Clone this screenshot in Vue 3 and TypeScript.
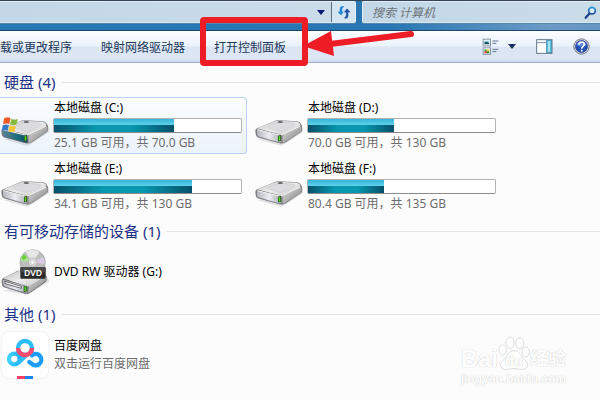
<script setup lang="ts">
interface Drive {
  letter: string
  free: number
  freeLabel: string
  total: number
  totalLabel: string
  system?: boolean
}

const drives: Drive[] = [
  { letter: 'C', free: 25.1, freeLabel: '25.1 GB', total: 70, totalLabel: '70.0 GB', system: true },
  { letter: 'D', free: 70, freeLabel: '70.0 GB', total: 130, totalLabel: '130 GB' },
  { letter: 'E', free: 34.1, freeLabel: '34.1 GB', total: 130, totalLabel: '130 GB' },
  { letter: 'F', free: 80.4, freeLabel: '80.4 GB', total: 135, totalLabel: '135 GB' },
]

const commands: string[] = ['载或更改程序', '映射网络驱动器', '打开控制面板']

const usedPercent = (d: Drive): string => `${((d.total - d.free) / d.total) * 100}%`
</script>

<template>
  <div class="window">
    <svg class="defs" width="0" height="0" aria-hidden="true">
      <defs>
        <linearGradient id="caseTop" x1="0" y1="0" x2="1" y2="1">
          <stop offset="0" stop-color="#c4c4c6" />
          <stop offset="0.5" stop-color="#ececec" />
          <stop offset="1" stop-color="#c4c4c4" />
        </linearGradient>
        <linearGradient id="caseFront" x1="0" y1="0" x2="1" y2="0">
          <stop offset="0" stop-color="#b4b4bc" />
          <stop offset="0.5" stop-color="#ececf4" />
          <stop offset="1" stop-color="#a4a4aa" />
        </linearGradient>
        <linearGradient id="caseSide" x1="0" y1="0" x2="1" y2="1">
          <stop offset="0" stop-color="#e0e0e0" />
          <stop offset="1" stop-color="#7c7c7c" />
        </linearGradient>
        <linearGradient id="tealFront" x1="0" y1="0" x2="1" y2="0">
          <stop offset="0" stop-color="#5f8190" />
          <stop offset="0.6" stop-color="#1a6c80" />
          <stop offset="1" stop-color="#164b5b" />
        </linearGradient>
        <linearGradient id="cloud" x1="0" y1="0" x2="1" y2="0">
          <stop offset="0" stop-color="#3fd3fb" />
          <stop offset="1" stop-color="#22b0fa" />
        </linearGradient>
        <linearGradient id="lens" x1="0" y1="0" x2="0" y2="1">
          <stop offset="0" stop-color="#2c9ad8" />
          <stop offset="1" stop-color="#1d3c8c" />
        </linearGradient>
      </defs>
    </svg>

    <header class="navbar">
      <div class="address">
        <button class="address-drop" type="button" aria-label="地址">
          <svg width="8" height="5" viewBox="0 0 8 5"><path d="M0 0h8L4 5z" fill="#0b1878" /></svg>
        </button>
        <button class="refresh" type="button" aria-label="刷新">
          <svg width="16" height="16" viewBox="0 0 48 48">
            <path d="M22 5C11 5 9 12 10 22H2l13 13 12-13h-7c-1-8 0-11 6-14z" fill="#2586d4" stroke="#e7f4ff" stroke-width="2" />
            <path d="M26 45c11 0 13-7 12-19h8L33 12 21 26h8c1 8 0 12-6 15z" fill="#1f55a4" stroke="#e7f4ff" stroke-width="2" />
          </svg>
        </button>
      </div>
      <label class="search">
        <input type="text" placeholder="搜索 计算机" aria-label="搜索 计算机" />
        <svg width="13" height="13" viewBox="0 0 39 39">
          <path d="M17 22L5 35" stroke="#1c3f88" stroke-width="7" stroke-linecap="round" />
          <circle cx="24" cy="14" r="10" fill="#d7effa" stroke="url(#lens)" stroke-width="5" />
        </svg>
      </label>
    </header>

    <nav class="toolbar">
      <div class="commands">
        <button v-for="c in commands" :key="c" type="button">{{ c }}</button>
      </div>
      <div class="tools">
        <button class="view" type="button" aria-label="更改视图">
          <svg width="18" height="18" viewBox="0 0 54 54">
            <g fill="#fff" stroke="#8796aa" stroke-width="3">
              <rect x="3.500" y="3.500" width="22" height="20" />
              <rect x="3.500" y="29.500" width="22" height="20" />
            </g>
            <path d="M7 8h15v6H7z" fill="#8ed5f4" />
            <path d="M7 13l8-2 7 4v4H7z" fill="#175763" />
            <path d="M7 34h7v6H7z" fill="#35a64a" />
            <path d="M14 34h8v6h-8z" fill="#e5c827" />
            <path d="M7 40h8v6H7z" fill="#c53936" />
            <path d="M15 40h7v6h-7z" fill="#22801f" />
            <path d="M31 9h18M31 16h12M31 34h18M31 41h12" stroke="#637792" stroke-width="3" />
          </svg>
          <svg class="caret" width="8" height="5" viewBox="0 0 8 5"><path d="M0 0h8L4 5z" fill="#14305c" /></svg>
        </button>
        <button type="button" aria-label="预览窗格">
          <svg width="17" height="15" viewBox="0 0 51 45">
            <rect x="2" y="2" width="46" height="41" fill="#fff" stroke="#64748a" stroke-width="3" />
            <path d="M3 11h27" stroke="#7d8da2" stroke-width="3" />
            <rect x="31" y="4" width="16" height="37" fill="#5bbbd6" stroke="#3b86a4" stroke-width="2" />
            <path d="M36 6h6v32h-6z" fill="#a8e3ef" />
          </svg>
        </button>
        <button type="button" aria-label="帮助">
          <svg width="17" height="17" viewBox="0 0 51 51">
            <circle cx="25.500" cy="25.500" r="23" fill="#d7d9de" stroke="#777b85" stroke-width="3" />
            <circle cx="25.500" cy="25.500" r="18" fill="#2250b4" stroke="#18337f" stroke-width="2" />
            <path d="M10 22a16 16 0 0 1 31 0q-16 7-31 0z" fill="#5c86da" />
            <path d="M18 20c0-10 16-10 16-1 0 6-8 6-8 13" fill="none" stroke="#fff" stroke-width="5" />
            <circle cx="26" cy="38" r="3" fill="#fff" />
          </svg>
        </button>
      </div>
    </nav>

    <main class="content">
      <section>
        <h2>硬盘 (4)</h2>
        <div class="grid">
          <article v-for="d in drives" :key="d.letter" class="tile" :class="{ selected: d.system }">
            <svg class="icon" width="50" height="48" viewBox="0 -46 150 144">
              <path d="M10 66l72 20 66-42-4-12z" fill="#000" opacity="0.1" />
              <path d="M4 42q-1-6 5-9l48-20q8-4 18-4l54 3q8 1 12 8 5 5 4 16 0 6-5 9L96 75q-9 5-18 3L11 60q-6-2-7-18z" fill="#808084" />
              <path d="M9 33l50-20q6-3 15-3l53 3q8 1 12 8-2 6-6 8L88 50q-6 3-14 1z" fill="url(#caseTop)" />
              <path d="M42 28l28-12q6-2 14-1l35 3q9 2 1 7L88 40q-7 3-15 1l-29-8q-5-2-2-5z" fill="#dcdcdf" stroke="#bcbcbf" />
              <path d="M86 52l51-25 5 2q2 11-3 15L94 73q-4 3-9 3z" fill="url(#caseSide)" />
              <path d="M8 36l66 16q9 3 10 23-5 2-9 1L12 58q-6-4-4-22z" :fill="d.system ? 'url(#tealFront)' : 'url(#caseFront)'" stroke="#707077" stroke-width="2" />
              <path d="M10 37l65 16q6 1 9-1l55-26" fill="none" stroke="#f8f8f8" stroke-width="3" />
              <ellipse cx="79" cy="14" rx="8" ry="3" fill="#666" />
              <path d="M72 55l9-2v17l-9 2z" fill="#214617" />
              <path d="M74 57l5-1v13l-5 1z" fill="#52dc22" />
              <g v-if="d.system" stroke="#fff" stroke-opacity="0.4">
                <path d="M12 3q10-6 20-1l-4 18q-9-4-19 1z" fill="#ed5a24" />
                <path d="M34 4q9 5 20 0l-5 18q-9 4-19-1z" fill="#83b83b" />
                <path d="M8 24q9-5 19-1l-4 18q-8-4-18 0z" fill="#317bc6" />
                <path d="M29 24q10 5 19 1l-4 18q-10 3-19-1z" fill="#f7c536" />
              </g>
            </svg>
            <div class="details">
              <div class="name">本地磁盘 ({{ d.letter }}:)</div>
              <div class="bar"><div class="used" :style="{ width: usedPercent(d) }"></div></div>
              <div class="note">{{ d.freeLabel }} 可用，共 {{ d.totalLabel }}</div>
            </div>
          </article>
        </div>
      </section>

      <section>
        <h2>有可移动存储的设备 (1)</h2>
        <article class="item">
          <svg class="icon" width="50" height="48" viewBox="0 0 150 144">
            <path d="M10 128l72 12 66-38-4-12z" fill="#000" opacity="0.1" />
            <path d="M5 98q0-6 6-8l42-22h70q16 10 17 18 2 10-3 16l-46 32q-8 5-16 3L12 118q-7-3-7-20z" fill="#78787c" />
            <path d="M10 91l44-22h68l17 16-50 29q-7 3-15 0z" fill="url(#caseTop)" />
            <path d="M87 114l51-29q2 10-3 15l-44 31q-4 3-7 3z" fill="url(#caseSide)" />
            <path d="M8 94l65 19q10 5 10 21-5 2-10 0L13 116q-6-4-5-22z" fill="url(#caseFront)" stroke="#707077" stroke-width="2" />
            <path d="M15 100l49 15v6l-49-14z" fill="#f6f6f6" stroke="#303034" stroke-width="2" />
            <path d="M72 115l8-1v15l-8 2z" fill="#48d018" stroke="#284e19" stroke-width="2" />
            <circle cx="98" cy="43" r="38" fill="#bebebe" stroke="#98989a" stroke-width="2" />
            <path d="M98 43L76 12q22-13 42 0z" fill="#e7e7e7" />
            <path d="M98 43L61 39q2-13 10-21z" fill="#b2dc9b" />
            <path d="M64 29l8-10 9 9-10 9z" fill="#65d438" />
            <path d="M98 43l36 5q1-11-4-20z" fill="#dbcae3" />
            <circle cx="98" cy="43" r="13" fill="#dbdbdb" stroke="#aaa" stroke-width="2" />
            <circle cx="98" cy="43" r="6" fill="#f9f9f9" stroke="#999" />
            <rect x="61" y="58" width="76" height="34" rx="3" fill="#2b2b2b" />
            <path d="M61 58h76v14q-38 6-76 0z" fill="#494949" />
            <text x="99" y="84" text-anchor="middle" class="dvd">DVD</text>
          </svg>
          <div class="details"><div class="name">DVD RW 驱动器 (G:)</div></div>
        </article>
      </section>

      <section>
        <h2>其他 (1)</h2>
        <article class="item">
          <svg class="icon" width="50" height="50" viewBox="0 0 150 150">
            <rect x="4" y="4" width="142" height="142" rx="24" fill="#fff" stroke="#ececec" stroke-width="2" />
            <g fill="none" stroke-width="13" stroke-linecap="round">
              <path d="M75 76L93 96" stroke="#fff" />
              <circle cx="43" cy="87" r="16" stroke="url(#cloud)" />
              <path d="M55 98L77 77" stroke="#2dbdfb" />
              <path d="M88 96l6 4a17 17 0 1 0 2-24" stroke="#1c9dfa" />
              <circle cx="75" cy="54" r="21" stroke="#2bbcfa" />
              <path d="M54 54a21 21 0 0 0 42 0" stroke="#fa4a70" stroke-linecap="butt" />
            </g>
            <path d="M51 138h24v9H51z" fill="#fa4168" />
            <path d="M75 138h24v9H75z" fill="#1e80f7" />
          </svg>
          <div class="details roomy">
            <div class="name">百度网盘</div>
            <div class="note">双击运行百度网盘</div>
          </div>
        </article>
      </section>
    </main>

    <svg class="marker" width="420" height="70" viewBox="0 0 420 70" aria-hidden="true">
      <rect x="203" y="20" width="102" height="43" rx="1" fill="none" stroke="#ee1c25" stroke-width="6" />
      <path d="M330 44L411 34" stroke="#ee1c25" stroke-width="6" stroke-linecap="round" />
      <path d="M303 46L331 31L334 56z" fill="#ee1c25" />
    </svg>

    <div class="watermark">
      <div class="brand">
        <span class="latin">Bai</span>
        <span class="paw">
          <svg width="32" height="36" viewBox="0 0 96 108">
            <g fill="#fefefe" stroke="#dedede" stroke-width="3">
              <ellipse cx="14" cy="45" rx="11" ry="15" />
              <ellipse cx="36" cy="23" rx="12" ry="17" />
              <ellipse cx="65" cy="25" rx="12" ry="16" />
              <ellipse cx="83" cy="51" rx="11" ry="15" />
              <path d="M48 47c-18 0-18 17-31 27-19 16-6 33 12 29 14-3 24-3 38 0 21 3 30-15 12-30-13-11-14-26-31-26z" />
            </g>
          </svg>
          <span class="du">du</span>
        </span>
        <span class="han">经验</span>
      </div>
      <div class="site">jingyan.baidu.com</div>
    </div>
  </div>
</template>

<style>
body {
  margin: 0;
  background: #fcfcfc;
}
</style>

<style scoped>
.window {
  position: relative;
  min-height: 100vh;
  overflow: hidden;
  background: #fcfcfc;
  color: #000;
  font-family: "Noto Sans", "Noto Sans CJK SC", sans-serif;
  font-size: 12px;
}

.defs {
  position: absolute;
}

button {
  display: flex;
  align-items: center;
  padding: 0;
  border: 0;
  background: none;
  color: inherit;
  font: inherit;
}

svg {
  display: block;
  flex: none;
}

.navbar {
  display: grid;
  grid-template-columns: 356fr 238fr;
  gap: 6px;
  height: 31px;
  box-sizing: border-box;
  padding-bottom: 7px;
  border-top: 1px solid #344456;
  border-bottom: 1px solid #1d4468;
  background: linear-gradient(90deg, #2679b4 0%, #2876b2 65%, #6c9bc7 92%, #6595c2 100%);
}

.address,
.search {
  display: flex;
  align-items: center;
  box-sizing: border-box;
  border: 1px solid #e3eef5;
  border-bottom-color: #d6e6f1;
  background: linear-gradient(90deg, #c3d7e6, #cbdce9);
  box-shadow: 0 1px #5688ad;
}

.address {
  justify-content: flex-end;
  border-left: 0;
  border-radius: 0 2px 2px 0;
}

.address-drop {
  padding: 0 6px;
}

.refresh {
  align-self: stretch;
  justify-content: center;
  width: 24px;
  border-left: 1px solid #5b6f80;
  background: #d5e5f1;
}

.search {
  padding: 0 3px 0 9px;
  border-right: 0;
  border-radius: 2px 0 0 2px;
}

.search input {
  flex: 1;
  min-width: 0;
  padding: 0;
  border: 0;
  outline: 0;
  background: none;
  font: inherit;
  font-style: italic;
}

.search input::placeholder {
  color: #6c747b;
  opacity: 1;
}

.toolbar {
  display: flex;
  align-items: center;
  justify-content: space-between;
  box-sizing: border-box;
  height: 32px;
  padding-right: 10px;
  border-bottom: 1px solid #9daec6;
  background: linear-gradient(#fcfeff 0%, #eaf2fb 48%, #dbe5f3 52%, #dce6f4 90%, #cdd9ea 100%);
  color: #1e395b;
}

.commands {
  display: flex;
  gap: 29px;
}

.tools {
  display: flex;
  align-items: center;
  gap: 20px;
}

.view {
  gap: 8px;
}

.content {
  padding-top: 9px;
}

section {
  margin-bottom: 6px;
}

h2 {
  display: flex;
  align-items: center;
  gap: 7px;
  margin: 0 0 5px;
  padding-left: 4px;
  color: #1e3287;
  font-size: 15px;
  font-weight: 400;
  line-height: 20px;
}

h2::after {
  flex: 1;
  height: 1px;
  background: #e0e2e6;
  content: "";
}

.grid {
  display: grid;
  grid-template-columns: repeat(auto-fill, 247px);
  gap: 4px 7px;
}

.tile,
.item {
  display: flex;
  align-items: center;
  gap: 3px;
}

.tile {
  box-sizing: border-box;
  padding: 2px 4px 2px 0;
  border: 1px solid transparent;
  border-left: 0;
}

.selected {
  border-color: #b8d3f6;
  border-radius: 0 3px 3px 0;
  background: linear-gradient(#fafcfe, #edf3fb);
}

.item {
  min-height: 52px;
}

.tile .details {
  flex: 1;
}

.name,
.note {
  padding-left: 1px;
  line-height: 16px;
  white-space: nowrap;
}

.note {
  color: #6d6d6d;
}

.roomy .name,
.roomy .note {
  line-height: 18px;
}

.bar {
  box-sizing: border-box;
  height: 15px;
  margin: 2px 0;
  border: 1px solid #b2b2b2;
  border-bottom-color: #8c8c8c;
  border-radius: 2px;
  background: #fff;
}

.used {
  height: 100%;
  background:
    linear-gradient(#35b4d8, #5fd2ea) 0 0 / 100% 6px no-repeat,
    linear-gradient(90deg, #06506a, #0897ae 35%, #0897ae 65%, #06506a);
}

.dvd {
  fill: #fff;
  font-size: 26px;
  font-weight: 600;
}

.marker {
  position: absolute;
  top: 0;
  left: 0;
  pointer-events: none;
}

.watermark {
  position: absolute;
  right: 34px;
  bottom: 13px;
  color: #fefefe;
  font-family: "Liberation Sans", "Noto Sans CJK SC", sans-serif;
  font-weight: 700;
  text-shadow: 0 0 1px #d2d2d2, 0 0 1px #d2d2d2;
}

.brand {
  display: flex;
  align-items: flex-end;
  font-size: 24px;
  line-height: 24px;
}

.paw {
  position: relative;
}

.du {
  position: absolute;
  right: 0;
  bottom: 2px;
  left: 0;
  font-size: 15px;
  line-height: 16px;
  text-align: center;
}

.han {
  font-size: 18px;
}

.site {
  font-size: 12px;
  line-height: 16px;
}
</style>
